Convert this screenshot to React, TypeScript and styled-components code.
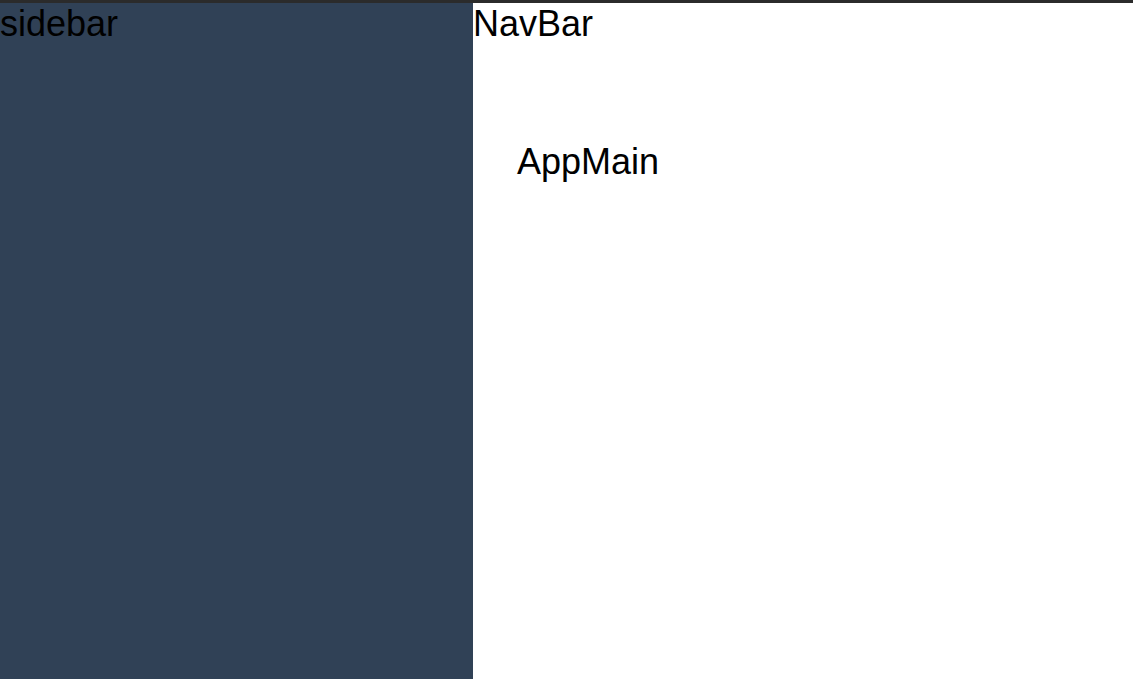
import React from "react";
import styled, { createGlobalStyle } from "styled-components";

const GlobalStyle = createGlobalStyle`
  html, body { margin: 0; padding: 0; height: 100%; background: #ffffff; }
  body { font-family: "Liberation Sans", Arial, sans-serif; font-size: 36px; color: #000; }
  #root { height: 100%; }
`;

const Frame = styled.div`
  display: flex;
  flex-direction: column;
  height: 100vh;
  border-top: 3px solid #2b2b2b;
  box-sizing: border-box;
`;

const Layout = styled.div`
  display: flex;
  flex: 1;
  min-height: 0;
`;

const Sidebar = styled.aside`
  width: 473px;
  flex-shrink: 0;
  background: #304156;
`;

const MainColumn = styled.div`
  flex: 1;
  display: flex;
  flex-direction: column;
`;

const NavBar = styled.header`
  height: 94px;
`;

const AppMain = styled.main`
  padding: 44px;
  padding-top: 44px;
`;

export default function App() {
  return (
    <>
      <GlobalStyle />
      <Frame>
        <Layout>
          <Sidebar>sidebar</Sidebar>
          <MainColumn>
            <NavBar>NavBar</NavBar>
            <AppMain>AppMain</AppMain>
          </MainColumn>
        </Layout>
      </Frame>
    </>
  );
}
